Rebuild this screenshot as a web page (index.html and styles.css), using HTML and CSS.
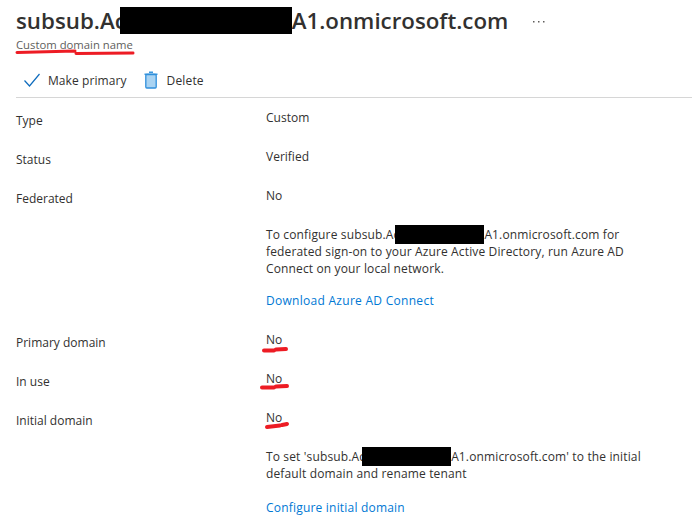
FILE: index.html
```html
<!DOCTYPE html>
<html lang="en">
<head>
<meta charset="utf-8">
<title>Custom domain name</title>
<link rel="stylesheet" href="styles.css">
</head>
<body>
<header class="head">
  <div class="title-row">
    <h1 class="title">subsub.Ac<span class="redact redact-title"></span>A1.onmicrosoft.com</h1>
    <svg class="more" width="12" height="3" viewBox="0 0 12 3"><g fill="#605e5c"><rect x="0" y="1" width="1.5" height="1.5"/><rect x="5" y="1" width="1.5" height="1.5"/><rect x="10" y="1" width="1.5" height="1.5"/></g></svg>
  </div>
  <div class="subtitle">Custom domain name</div>
</header>
<nav class="toolbar">
  <button class="tool tool-check">
    <svg class="icon" width="16" height="14" viewBox="0 0 16 14"><path d="M.5 7.5l5 5.5L15.5 1" fill="none" stroke="#0f6cbd" stroke-width="1.2"/></svg>
    Make primary
  </button>
  <button class="tool tool-delete">
    <svg class="icon" width="14" height="18" viewBox="0 0 14 18"><path d="M5 1.2h4M.5 3.2h13" fill="none" stroke="#3a96dd" stroke-width="1.4"/><rect x="1.8" y="3.5" width="10.4" height="13.5" rx="1" fill="#a9d3f2" stroke="#2f8fdb" stroke-width="1.3"/></svg>
    Delete
  </button>
</nav>
<main class="details">
  <div class="label">Type</div><div class="value">Custom</div>
  <div class="label">Status</div><div class="value">Verified</div>
  <div class="label">Federated</div>
  <div class="value">
    No
    <p class="para">To configure subsub.Ac<span class="redact redact-a"></span>A1.onmicrosoft.com for federated sign-on to your Azure Active Directory, run Azure AD Connect on your local network.</p>
    <a class="link" href="#">Download Azure AD Connect</a>
  </div>
  <div class="label">Primary domain</div><div class="value">No</div>
  <div class="label">In use</div><div class="value">No</div>
  <div class="label">Initial domain</div>
  <div class="value">
    No
    <p class="para">To set 'subsub.Ac<span class="redact redact-b"></span>A1.onmicrosoft.com' to the initial default domain and rename tenant</p>
    <a class="link link-last" href="#">Configure initial domain</a>
  </div>
</main>
<svg class="marks" width="692" height="518" viewBox="0 0 692 518" aria-hidden="true">
  <g fill="none" stroke="#ed1c24" stroke-linecap="round">
    <path stroke-width="3" d="M17 52.5L75 51M76 53.5L133 53"/>
    <path stroke-width="4" d="M264 350.5L274 350.5M276 349.5L286 349"/>
    <path stroke-width="4" d="M262 387.5L274 387.5M276 386.5L287 386"/>
    <path stroke-width="4" d="M267 427L280 425.5M282 425L287 424"/>
  </g>
</svg>
</body>
</html>
```
FILE: styles.css
```css
html, body {
  margin: 0;
  padding: 0;
  background: #fff;
}
body {
  position: relative;
  width: 692px;
  height: 518px;
  overflow: hidden;
  font-family: "Open Sans", "Noto Sans", sans-serif;
  font-size: 12px;
  line-height: 17px;
  color: #323130;
}
.head {
  padding: 7px 0 0 16px;
}
.title-row {
  display: flex;
  align-items: center;
  gap: 25px;
  height: 28px;
}
.title {
  margin: 0;
  font-size: 22.3px;
  font-weight: 600;
  line-height: 28px;
  white-space: nowrap;
}
.subtitle {
  margin-top: 2px;
  font-size: 11.3px;
  line-height: 16px;
  color: #605e5c;
}
.toolbar {
  display: flex;
  align-items: center;
  gap: 17px;
  height: 34px;
  margin-left: 16px;
  padding-top: 10px;
  border-bottom: 1px solid #d6d6d6;
}
.tool {
  display: flex;
  align-items: center;
  gap: 8px;
  padding: 0;
  border: 0;
  background: none;
  font: inherit;
  letter-spacing: 0.08px;
  color: #323130;
}
.tool-check {
  padding-left: 8px;
}
.tool-delete {
  gap: 9px;
  letter-spacing: 0.15px;
}
.details {
  display: grid;
  grid-template-columns: 250px 390px;
  padding: 11px 0 0 16px;
}
.label {
  padding-top: 3px;
}
.value {
  min-height: 39px;
}
.para {
  margin: 22px 0 0;
  letter-spacing: 0.14px;
}
.link {
  display: block;
  margin-top: 15px;
  margin-bottom: 22px;
  color: #0078d4;
  text-decoration: none;
  letter-spacing: 0.28px;
}
.link-last {
  margin-top: 17px;
  letter-spacing: 0.2px;
}
.redact {
  display: inline-block;
  background: #000;
  vertical-align: top;
}
.redact-title {
  width: 172px;
  height: 27px;
  margin-left: -6px;
}
.redact-a {
  width: 89px;
  height: 19px;
  margin: -1px 0 -1px -4px;
}
.redact-b {
  width: 89px;
  height: 19px;
  margin: -1px 0 -1px -3px;
}
.marks {
  position: absolute;
  left: 0;
  top: 0;
  pointer-events: none;
}
```
